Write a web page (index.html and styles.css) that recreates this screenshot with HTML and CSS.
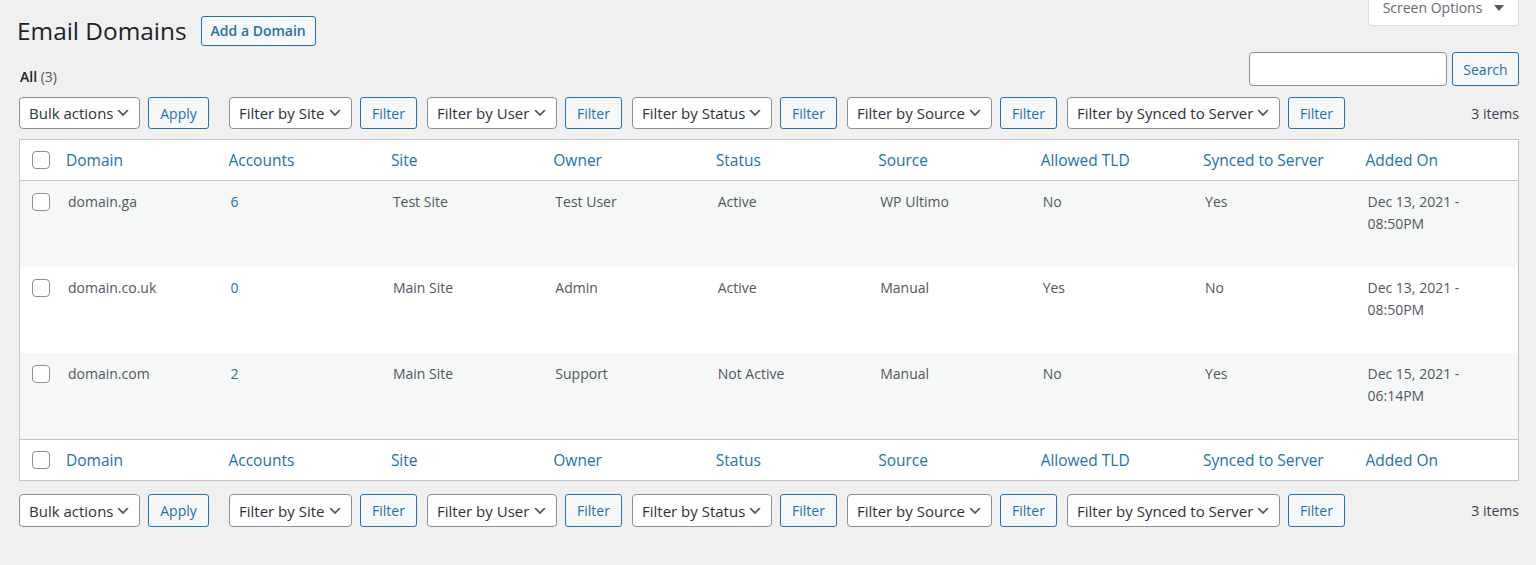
FILE: index.html
```html
<!DOCTYPE html>
<html>
<head>
    <title>Email Domains</title>
    <link rel="stylesheet" href="styles.css">
</head>
<body>
<div class="wrap">

    <div class="title-row">
        <h1 class="page-title">Email Domains</h1>
        <a href="#" class="page-title-action">Add a Domain</a>
        <div class="screen-options">
            <span>Screen Options</span>
            <svg width="10" height="8" viewBox="0 0 10 8"><path d="M0 1h10L5 7z" fill="#50575e"/></svg>
        </div>
    </div>

    <div class="list-top">
        <ul class="subsubsub">
            <li><b>All</b> <span class="count">(3)</span></li>
        </ul>
        <div class="search-box">
            <input type="text" class="search-input">
            <button class="button">Search</button>
        </div>
    </div>

    <div class="tablenav">
        <div class="actions actions-bulk">
            <div class="select select-bulk"><span>Bulk actions</span><svg width="16" height="16" viewBox="0 0 20 20"><path d="M5 6l5 5 5-5 2 1-7 7-7-7z" fill="#50575e"/></svg></div>
            <button class="button button-apply">Apply</button>
        </div>
        <div class="actions">
            <div class="select select-site"><span>Filter by Site</span><svg width="16" height="16" viewBox="0 0 20 20"><path d="M5 6l5 5 5-5 2 1-7 7-7-7z" fill="#50575e"/></svg></div>
            <button class="button button-filter">Filter</button>
        </div>
        <div class="actions">
            <div class="select select-user"><span>Filter by User</span><svg width="16" height="16" viewBox="0 0 20 20"><path d="M5 6l5 5 5-5 2 1-7 7-7-7z" fill="#50575e"/></svg></div>
            <button class="button button-filter">Filter</button>
        </div>
        <div class="actions">
            <div class="select select-status"><span>Filter by Status</span><svg width="16" height="16" viewBox="0 0 20 20"><path d="M5 6l5 5 5-5 2 1-7 7-7-7z" fill="#50575e"/></svg></div>
            <button class="button button-filter">Filter</button>
        </div>
        <div class="actions">
            <div class="select select-source"><span>Filter by Source</span><svg width="16" height="16" viewBox="0 0 20 20"><path d="M5 6l5 5 5-5 2 1-7 7-7-7z" fill="#50575e"/></svg></div>
            <button class="button button-filter">Filter</button>
        </div>
        <div class="actions">
            <div class="select select-synced"><span>Filter by Synced to Server</span><svg width="16" height="16" viewBox="0 0 20 20"><path d="M5 6l5 5 5-5 2 1-7 7-7-7z" fill="#50575e"/></svg></div>
            <button class="button button-filter">Filter</button>
        </div>
        <div class="displaying-num">3 items</div>
    </div>

    <table class="list-table">
        <colgroup>
            <col class="col-cb">
            <col><col><col><col><col><col><col><col><col>
        </colgroup>
        <thead>
            <tr>
                <td class="check-column"><span class="checkbox"></span></td>
                <th><a href="#">Domain</a></th>
                <th><a href="#">Accounts</a></th>
                <th><a href="#">Site</a></th>
                <th><a href="#">Owner</a></th>
                <th><a href="#">Status</a></th>
                <th><a href="#">Source</a></th>
                <th><a href="#">Allowed TLD</a></th>
                <th><a href="#">Synced to Server</a></th>
                <th><a href="#">Added On</a></th>
            </tr>
        </thead>
        <tbody>
            <tr class="alternate">
                <td class="check-column"><span class="checkbox"></span></td>
                <td>domain.ga</td>
                <td><a href="#">6</a></td>
                <td>Test Site</td>
                <td>Test User</td>
                <td>Active</td>
                <td>WP Ultimo</td>
                <td>No</td>
                <td>Yes</td>
                <td>Dec 13, 2021 -<br>08:50PM</td>
            </tr>
            <tr>
                <td class="check-column"><span class="checkbox"></span></td>
                <td>domain.co.uk</td>
                <td><a href="#">0</a></td>
                <td>Main Site</td>
                <td>Admin</td>
                <td>Active</td>
                <td>Manual</td>
                <td>Yes</td>
                <td>No</td>
                <td>Dec 13, 2021 -<br>08:50PM</td>
            </tr>
            <tr class="alternate">
                <td class="check-column"><span class="checkbox"></span></td>
                <td>domain.com</td>
                <td><a href="#">2</a></td>
                <td>Main Site</td>
                <td>Support</td>
                <td>Not Active</td>
                <td>Manual</td>
                <td>No</td>
                <td>Yes</td>
                <td>Dec 15, 2021 -<br>06:14PM</td>
            </tr>
        </tbody>
        <tfoot>
            <tr>
                <td class="check-column"><span class="checkbox"></span></td>
                <th><a href="#">Domain</a></th>
                <th><a href="#">Accounts</a></th>
                <th><a href="#">Site</a></th>
                <th><a href="#">Owner</a></th>
                <th><a href="#">Status</a></th>
                <th><a href="#">Source</a></th>
                <th><a href="#">Allowed TLD</a></th>
                <th><a href="#">Synced to Server</a></th>
                <th><a href="#">Added On</a></th>
            </tr>
        </tfoot>
    </table>

    <div class="tablenav tablenav-bottom">
        <div class="actions actions-bulk">
            <div class="select select-bulk"><span>Bulk actions</span><svg width="16" height="16" viewBox="0 0 20 20"><path d="M5 6l5 5 5-5 2 1-7 7-7-7z" fill="#50575e"/></svg></div>
            <button class="button button-apply">Apply</button>
        </div>
        <div class="actions">
            <div class="select select-site"><span>Filter by Site</span><svg width="16" height="16" viewBox="0 0 20 20"><path d="M5 6l5 5 5-5 2 1-7 7-7-7z" fill="#50575e"/></svg></div>
            <button class="button button-filter">Filter</button>
        </div>
        <div class="actions">
            <div class="select select-user"><span>Filter by User</span><svg width="16" height="16" viewBox="0 0 20 20"><path d="M5 6l5 5 5-5 2 1-7 7-7-7z" fill="#50575e"/></svg></div>
            <button class="button button-filter">Filter</button>
        </div>
        <div class="actions">
            <div class="select select-status"><span>Filter by Status</span><svg width="16" height="16" viewBox="0 0 20 20"><path d="M5 6l5 5 5-5 2 1-7 7-7-7z" fill="#50575e"/></svg></div>
            <button class="button button-filter">Filter</button>
        </div>
        <div class="actions">
            <div class="select select-source"><span>Filter by Source</span><svg width="16" height="16" viewBox="0 0 20 20"><path d="M5 6l5 5 5-5 2 1-7 7-7-7z" fill="#50575e"/></svg></div>
            <button class="button button-filter">Filter</button>
        </div>
        <div class="actions">
            <div class="select select-synced"><span>Filter by Synced to Server</span><svg width="16" height="16" viewBox="0 0 20 20"><path d="M5 6l5 5 5-5 2 1-7 7-7-7z" fill="#50575e"/></svg></div>
            <button class="button button-filter">Filter</button>
        </div>
        <div class="displaying-num">3 items</div>
    </div>

</div>
</body>
</html>
```

FILE: styles.css
```css
body {
    margin: 0;
    background-color: #f0f0f1;
    color: #3c434a;
    font-family: "Open Sans", "Noto Sans", sans-serif;
    font-size: 15px;
}

a {
    color: #2271b1;
    text-decoration: none;
}

.wrap {
    padding: 0 17px 0 19px;
}

.title-row {
    display: flex;
    align-items: center;
    padding-top: 16px;
    height: 30px;
}
.page-title {
    margin: 0 0 0 -2px;
    font-size: 24.4px;
    font-weight: 400;
    color: #1d2327;
    line-height: 30px;
}
.page-title-action {
    margin-left: 14px;
    height: 28px;
    padding: 0 9px;
    border: 1px solid #2271b1;
    border-radius: 3px;
    background-color: #f6f7f7;
    font-size: 14px;
    font-weight: 600;
    line-height: 28px;
}

.screen-options {
    margin-left: auto;
    align-self: flex-start;
    margin-top: -17px;
    height: 27px;
    width: 151px;
    box-sizing: border-box;
    padding-bottom: 8px;
    display: flex;
    align-items: flex-end;
    justify-content: center;
    gap: 12px;
    background-color: #fff;
    border: 1px solid #dcdcde;
    border-top: none;
    border-radius: 0 0 4px 4px;
    color: #646970;
    font-size: 14px;
}
.screen-options svg {
    margin-bottom: 5px;
}

.list-top {
    display: flex;
    align-items: center;
    margin-top: 6px;
    height: 34px;
}
.subsubsub {
    list-style: none;
    margin: 14px 0 0 1px;
    padding: 0;
    font-size: 14px;
    color: #1d2327;
}
.subsubsub b {
    font-weight: 600;
}
.subsubsub .count {
    color: #50575e;
}
.search-box {
    margin-left: auto;
    display: flex;
    gap: 5px;
}
.search-input {
    width: 198px;
    height: 34px;
    box-sizing: border-box;
    border: 1px solid #8c8f94;
    border-radius: 4px;
    background-color: #fff;
    margin: 0;
}

.button {
    height: 34px;
    box-sizing: border-box;
    padding: 0 10px;
    border: 1px solid #2271b1;
    border-radius: 3px;
    background-color: #f6f7f7;
    color: #2271b1;
    font-family: inherit;
    font-size: 14px;
    margin: 0;
}
.search-box .button {
    width: 67px;
}

.tablenav {
    display: flex;
    align-items: center;
    margin-top: 11px;
    height: 32px;
}
.tablenav-bottom {
    margin-top: 13px;
    height: 33px;
}
.actions {
    display: flex;
    gap: 8px;
    margin-right: 10px;
}
.actions-bulk {
    margin-right: 20px;
}
.tablenav .button {
    height: 32px;
}
.tablenav-bottom .button,
.tablenav-bottom .select {
    height: 33px;
}
.button-apply {
    width: 61px;
}
.button-filter {
    width: 57px;
}

.select {
    height: 32px;
    box-sizing: border-box;
    display: flex;
    align-items: center;
    justify-content: space-between;
    padding: 0 8px 0 9px;
    background-color: #fff;
    border: 1px solid #8c8f94;
    border-radius: 4px;
    color: #2c3338;
    font-size: 15px;
    white-space: nowrap;
}
.select-bulk { width: 121px; }
.select-site { width: 123px; }
.select-user { width: 130px; }
.select-status { width: 140px; }
.select-source { width: 145px; }
.select-synced { width: 213px; }

.displaying-num {
    margin-left: auto;
    color: #3c434a;
    font-size: 14px;
}

.list-table {
    width: 100%;
    margin-top: 10px;
    border: 1px solid #c3c4c7;
    border-spacing: 0;
    table-layout: fixed;
    background-color: #fff;
}
.col-cb {
    width: 36px;
}
.list-table thead th,
.list-table thead td,
.list-table tfoot th,
.list-table tfoot td {
    height: 40px;
    padding: 0 10px;
    text-align: left;
    font-weight: 400;
    font-size: 15.5px;
    vertical-align: middle;
}
.list-table thead th,
.list-table thead td {
    border-bottom: 1px solid #c3c4c7;
}
.list-table tfoot th,
.list-table tfoot td {
    border-top: 1px solid #c3c4c7;
}
.list-table tbody td {
    height: 86px;
    box-sizing: border-box;
    padding: 10px 10px 0 12px;
    vertical-align: top;
    color: #50575e;
    font-size: 14px;
    line-height: 22px;
}
.list-table tbody tr.alternate td {
    background-color: #f6f7f7;
}
.list-table .check-column {
    padding: 0 0 0 12px;
}
.list-table tbody .check-column {
    padding: 12px 0 0 12px;
}

.checkbox {
    display: block;
    width: 18px;
    height: 18px;
    box-sizing: border-box;
    border: 1px solid #8c8f94;
    border-radius: 4px;
    background-color: #fff;
}
```
